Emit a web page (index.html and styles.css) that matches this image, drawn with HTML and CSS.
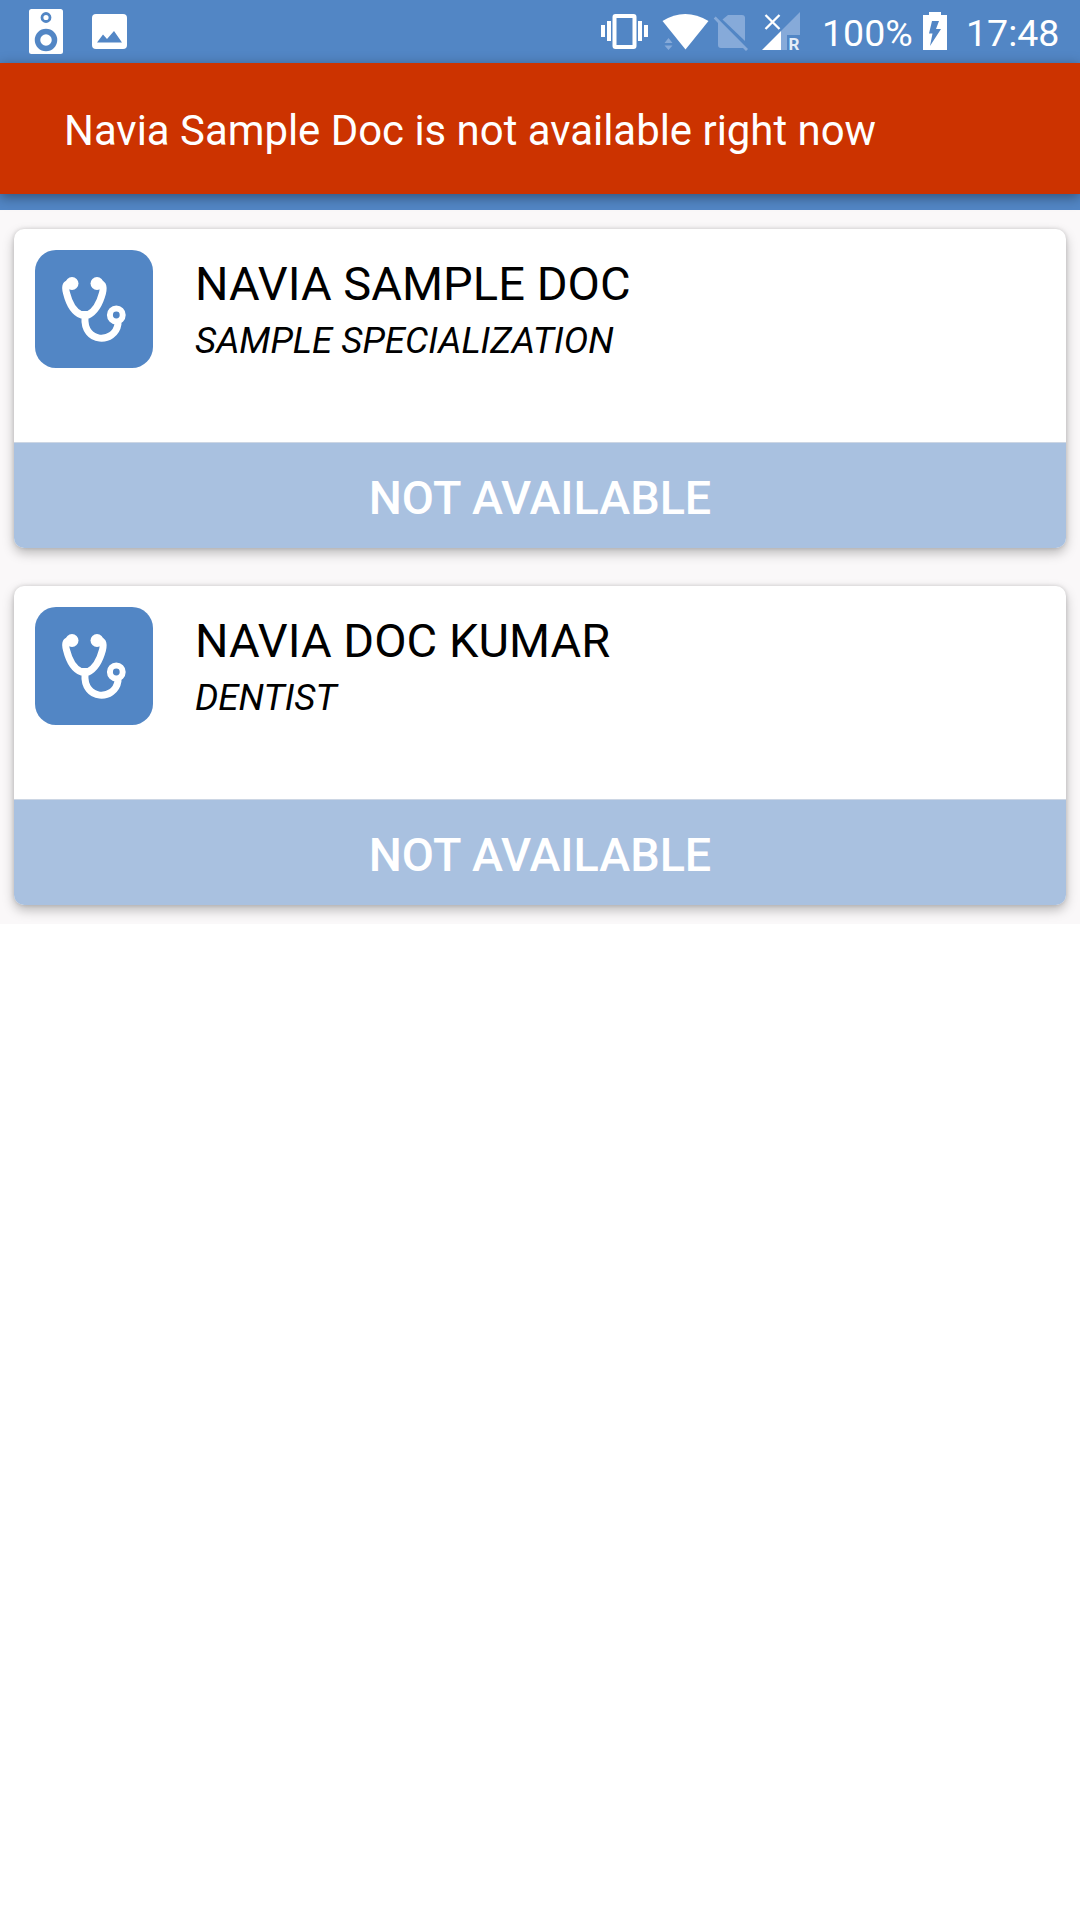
FILE: index.html
```html
<!DOCTYPE html>
<html lang="en">
<head>
<meta charset="utf-8">
<title>Doctors</title>
<link rel="stylesheet" href="styles.css">
</head>
<body>
<svg class="symbols" aria-hidden="true">
  <symbol id="stethoscope" viewBox="0 0 118 118">
    <g fill="none" stroke="#fff" stroke-width="7" stroke-linecap="round" stroke-linejoin="round">
      <path d="M36 34Q28.500 32 31.500 43Q36 61 46.500 65H53Q63 60 67.500 43Q70 32 62.500 34"/>
      <path d="M46 63H54L50 69Z" fill="#fff" stroke-width="4"/>
      <path d="M50 67C48 94 80 94 83 74"/>
      <circle cx="81.300" cy="65" r="6.400" stroke-width="6"/>
    </g>
    <circle cx="37" cy="33.500" r="6.500" fill="#fff"/>
    <circle cx="62" cy="33.500" r="6.500" fill="#fff"/>
  </symbol>
</svg>

<header class="status-bar">
  <svg class="speaker" width="34" height="46" viewBox="0 0 34 46">
    <rect width="34" height="45" rx="2.500" fill="#fff"/>
    <g fill="none" stroke="#5286c5"><circle cx="17" cy="8.500" r="4" stroke-width="2.800"/><circle cx="17" cy="31" r="8.500" stroke-width="5.500"/></g>
  </svg>
  <svg class="picture" width="35" height="35" viewBox="0 0 35 35">
    <rect width="35" height="35" rx="4" fill="#fff"/>
    <path d="M5 28.500L11 20.500L15 25L22 17L30 28.500Z" fill="#5286c5"/>
  </svg>
  <svg class="system" width="212" height="40" viewBox="0 0 212 40">
    <g fill="#fff">
      <rect x="14.500" y="4" width="20" height="31" rx="1" fill="none" stroke="#fff" stroke-width="4"/>
      <path d="M1 13h4v12h-4zM7 9h4v20h-4zM38 9h4v20h-4zM44 13h4v12h-4z"/>
      <path d="M62.500 9Q85 -5 108.500 9L85.500 37.500Z"/>
    </g>
    <g fill="#86aad9">
      <path d="M64.500 31L68.500 26L72.500 31ZM64.500 33.500L68.500 38L72.500 33.500Z"/>
      <path d="M128 3h14q3 0 3 3v23L122.500 7.500Z"/>
      <path d="M113.700 6.500L115.700 4.500L148 37L146 39L143 36H121q-3 0-3-3V11Z"/>
      <path d="M200 0V23H187V38H181V19Z"/>
    </g>
    <path d="M162 38L181 19V38Z" fill="#fff"/>
    <path d="M165.500 3L179.500 17M179.500 3L165.500 17" stroke="#fff" stroke-width="2.300"/>
    <text class="roaming" x="188.500" y="37.500">R</text>
  </svg>
  <span class="percent">100%</span>
  <svg class="battery" width="24" height="38" viewBox="0 0 24 38">
    <path d="M0 3h6V0h12v3h6v35H0Z" fill="#fff"/>
    <path d="M9 9H16L13 17H18L7 34L9.500 21.500H6Z" fill="#5286c5"/>
  </svg>
  <time class="clock">17:48</time>
</header>

<div class="alert" role="alert"><span class="alert-text">Navia Sample Doc is not available right now</span></div>
<div class="app-bar"></div>

<main class="doctors">
  <article class="card">
    <div class="info">
      <div class="avatar"><svg width="118" height="118"><use href="#stethoscope"/></svg></div>
      <div class="details">
        <h2 class="name"><span>NAVIA SAMPLE DOC</span></h2>
        <p class="specialty"><span>SAMPLE SPECIALIZATION</span></p>
      </div>
    </div>
    <button class="availability" disabled><span>NOT AVAILABLE</span></button>
  </article>
  <article class="card">
    <div class="info">
      <div class="avatar"><svg width="118" height="118"><use href="#stethoscope"/></svg></div>
      <div class="details">
        <h2 class="name"><span>NAVIA DOC KUMAR</span></h2>
        <p class="specialty"><span>DENTIST</span></p>
      </div>
    </div>
    <button class="availability" disabled><span>NOT AVAILABLE</span></button>
  </article>
</main>
</body>
</html>
```
FILE: styles.css
```css
* { box-sizing: border-box; }
body { margin: 0; min-height: 1920px; background: #fff; font-family: Roboto, sans-serif; color: #000; }
h2, p { margin: 0; font-weight: 400; }
svg { display: block; flex: none; }
.symbols { display: none; }

.status-bar { height: 63px; padding: 0 22px 0 29px; display: flex; align-items: flex-start; background: #5286c5; color: #fff; font-size: 37.5px; line-height: 44px; white-space: nowrap; }
.speaker { margin-top: 9px; }
.picture { margin: 14px 0 0 29px; }
.system { margin: 12px 0 0 auto; }
.roaming { font: 700 17px Roboto, sans-serif; fill: #e4edf8; }
.percent { width: 90px; margin: 11px 0 0 10px; }
.battery { margin: 12px 0 0 11px; }
.clock { width: 92px; margin: 11px 0 0 19px; }

.alert { height: 131px; padding: 3px 64px 0; display: flex; align-items: center; position: relative; background: #cc3300; color: #fff; font-size: 41.9px; box-shadow: 0 3px 12px rgba(0, 0, 0, .4); white-space: nowrap; }
.app-bar { height: 16px; background: #5286c5; }

.doctors { height: 714px; padding: 19px 14px; display: flex; flex-direction: column; gap: 38px; background: #faf8f9; overflow: hidden; }
.card { height: 319px; display: flex; flex-direction: column; border-radius: 10px; background: #fff; box-shadow: 0 5px 12px rgba(0, 0, 0, .26), 0 0 4px rgba(0, 0, 0, .14); overflow: hidden; }
.info { flex: 1; display: flex; gap: 42px; padding: 21px; }
.avatar { width: 118px; height: 118px; border-radius: 21px; background: #5286c5; }
.name { margin-top: 4px; font-size: 47px; line-height: 60px; letter-spacing: .05px; }
.specialty { margin-top: 2px; font-size: 36.7px; line-height: 50px; font-style: italic; }
.availability { height: 106px; border: 0; border-top: 1px solid #ccd6e4; padding: 5px 0 0; background: #a9c1e0; color: #fff; font: 500 46.7px Roboto, sans-serif; }
```
